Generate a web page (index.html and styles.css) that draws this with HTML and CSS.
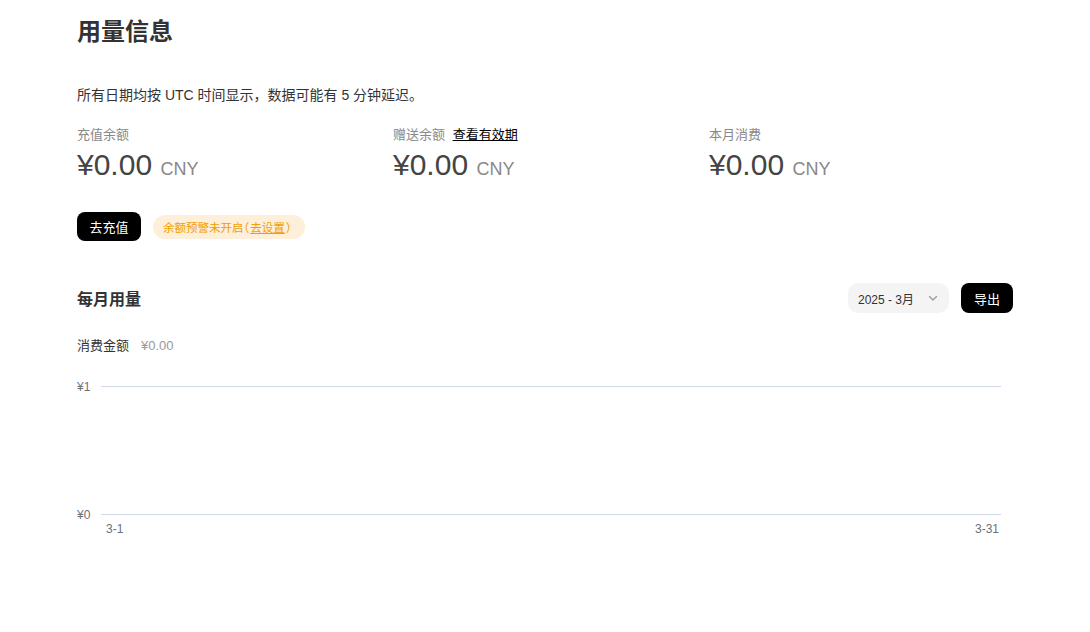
FILE: index.html
```html
<!DOCTYPE html>
<html lang="zh-CN">
<head>
<meta charset="utf-8">
<title>用量信息</title>
<link rel="stylesheet" href="styles.css">
</head>
<body>
<div class="page">
  <h1 class="title">用量信息</h1>
  <p class="note">所有日期均按 UTC 时间显示，数据可能有 5 分钟延迟。</p>

  <div class="balances">
    <div class="bal">
      <div class="bal-label">充值余额</div>
      <div class="bal-value">¥0.00 <span class="cur">CNY</span></div>
    </div>
    <div class="bal">
      <div class="bal-label">赠送余额 <a class="link" href="#">查看有效期</a></div>
      <div class="bal-value">¥0.00 <span class="cur">CNY</span></div>
    </div>
    <div class="bal">
      <div class="bal-label">本月消费</div>
      <div class="bal-value">¥0.00 <span class="cur">CNY</span></div>
    </div>
  </div>

  <div class="actions">
    <button class="btn-dark btn-topup">去充值</button>
    <span class="warn">余额预警未开启（<a href="#" class="warn-link">去设置</a>）</span>
  </div>

  <div class="section-head">
    <h2 class="section-title">每月用量</h2>
    <div class="tools">
      <div class="select">
        <span>2025 - 3月</span>
        <svg class="chev" width="12" height="12" viewBox="0 0 12 12"><path d="M2.5 4.5 L6 8 L9.5 4.5" fill="none" stroke="#999" stroke-width="1.2" stroke-linecap="round" stroke-linejoin="round"/></svg>
      </div>
      <button class="btn-dark btn-export">导出</button>
    </div>
  </div>

  <div class="sum">消费金额<span class="sum-val">¥0.00</span></div>

  <svg class="chart" width="936" height="190" viewBox="0 0 936 190">
    <line x1="24" y1="21.5" x2="924" y2="21.5" stroke="#d3d9e6" stroke-width="1"/>
    <line x1="24" y1="149.5" x2="924" y2="149.5" stroke="#d3d9e6" stroke-width="1"/>
    <text x="0" y="22.5" class="axis" dominant-baseline="middle">¥1</text>
    <text x="0" y="150.5" class="axis" dominant-baseline="middle">¥0</text>
    <text x="29" y="164.5" class="axis" dominant-baseline="middle">3-1</text>
    <text x="922" y="164.5" class="axis" text-anchor="end" dominant-baseline="middle">3-31</text>
  </svg>
</div>
</body>
</html>
```
FILE: styles.css
```css
* { box-sizing: border-box; }
html, body { margin: 0; padding: 0; background: #fff; }
body {
  font-family: "Liberation Sans", "Noto Sans CJK SC", sans-serif;
  color: #333;
}
.page {
  width: 936px;
  margin-left: 77px;
  padding-top: 16px;
}
.title {
  margin: 0;
  font-size: 24px;
  line-height: 32px;
  font-weight: 700;
  color: #333;
}
.note {
  margin: 37px 0 0;
  font-size: 14px;
  line-height: 20px;
  color: #333;
}
.balances {
  display: flex;
  margin-top: 20px;
}
.bal {
  flex: 0 0 316px;
}
.bal-label {
  font-size: 13px;
  line-height: 20px;
  color: #888;
}
.link {
  color: #000;
  text-decoration: underline;
  margin-left: 4px;
}
.bal-value {
  margin-top: 2px;
  font-size: 30px;
  line-height: 36px;
  color: #444;
}
.cur {
  font-size: 18px;
  color: #888;
  margin-left: 0;
}
.actions {
  display: flex;
  align-items: center;
  gap: 12px;
  margin-top: 25px;
}
.btn-dark {
  border: none;
  background: #000;
  color: #fff;
  font-family: inherit;
  font-size: 13px;
  border-radius: 8px;
  cursor: pointer;
  padding: 0;
}
.btn-topup {
  width: 64px;
  height: 29px;
}
.warn {
  display: inline-flex;
  align-items: center;
  width: 152px;
  height: 24px;
  padding: 0 0 0 10px;
  border-radius: 12px;
  background: #fdefd9;
  color: #f19e00;
  font-size: 11.5px;
  font-feature-settings: "halt";
  white-space: nowrap;
}
.warn-link {
  color: #f19e00;
  text-decoration: underline;
  margin: 0 1px;
}
.section-head {
  display: flex;
  align-items: center;
  justify-content: space-between;
  margin-top: 42px;
}
.section-title {
  margin: 0;
  font-size: 16px;
  font-weight: 700;
  color: #333;
}
.tools {
  display: flex;
  gap: 12px;
  align-items: center;
}
.select {
  width: 101px;
  height: 30px;
  border-radius: 10px;
  background: #f4f4f5;
  display: flex;
  align-items: center;
  justify-content: space-between;
  padding: 0 10px 0 10px;
  font-size: 12px;
  color: #333;
}
.chev { display: block; }
.btn-export {
  width: 52px;
  height: 30px;
}
.sum {
  margin-top: 23px;
  font-size: 13px;
  line-height: 20px;
  color: #333;
}
.sum-val {
  color: #999;
  margin-left: 12px;
}
.chart {
  display: block;
  margin-top: 9px;
}
.axis {
  font-family: "Liberation Sans", "Noto Sans CJK SC", sans-serif;
  font-size: 12px;
  fill: #6e7079;
}
```
